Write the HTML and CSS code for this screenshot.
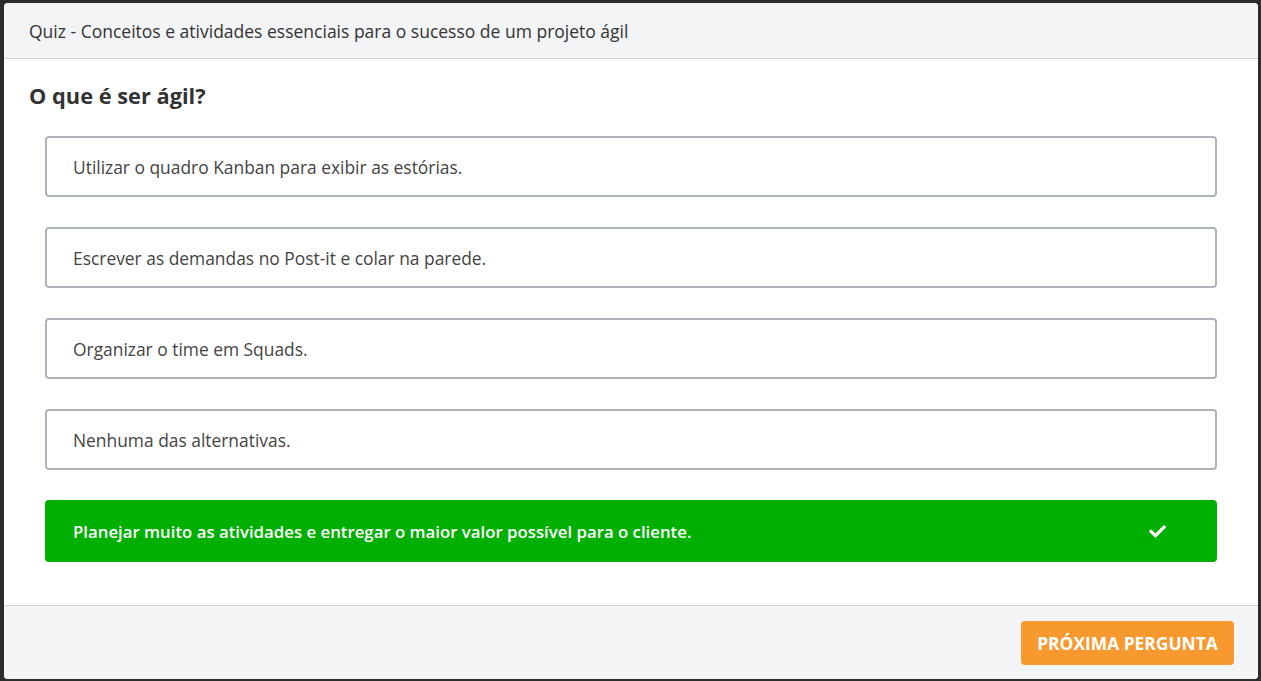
FILE: index.html
```
<!DOCTYPE html>
<html lang="pt">
<head>
<meta charset="utf-8">
<title>Quiz</title>
<link rel="stylesheet" href="styles.css">
</head>
<body>
<div class="modal">
  <div class="modal-header">Quiz - Conceitos e atividades essenciais para o sucesso de um projeto ágil</div>
  <div class="modal-body">
    <h2 class="question">O que é ser ágil?</h2>
    <ul class="options">
      <li class="option">Utilizar o quadro Kanban para exibir as estórias.</li>
      <li class="option">Escrever as demandas no Post-it e colar na parede.</li>
      <li class="option">Organizar o time em Squads.</li>
      <li class="option">Nenhuma das alternativas.</li>
      <li class="option correct">
        <span>Planejar muito as atividades e entregar o maior valor possível para o cliente.</span>
        <svg class="check" viewBox="0 0 512 512" width="17" height="17" aria-hidden="true"><path fill="#fff" d="M173.9 439.4l-166.4-166.4c-10-10-10-26.2 0-36.2l36.2-36.2c10-10 26.2-10 36.2 0L192 312.7 432.1 72.6c10-10 26.2-10 36.2 0l36.2 36.2c10 10 10 26.2 0 36.2l-294.4 294.4c-10 10-26.2 10-36.2 0z"/></svg>
      </li>
    </ul>
  </div>
  <div class="modal-footer">
    <button class="next-btn" type="button">PRÓXIMA PERGUNTA</button>
  </div>
</div>
</body>
</html>
```
FILE: styles.css
```
html, body {
  margin: 0;
  height: 100%;
}
body {
  background: #2c2c2c;
  padding: 3px 3px 2px 4px;
  box-sizing: border-box;
  font-family: "Open Sans", "Liberation Sans", sans-serif;
}
.modal {
  background: #fff;
  border-radius: 4px;
  overflow: hidden;
  height: 100%;
  display: flex;
  flex-direction: column;
}
.modal-header {
  background: #f3f4f6;
  height: 55px;
  border-bottom: 1px solid #cfd1d4;
  display: flex;
  align-items: center;
  padding-left: 25px;
  font-size: 17.5px;
  color: #333;
  box-sizing: content-box;
}
.modal-body {
  flex: 1;
  padding: 22px 41px 0 41px;
}
.question {
  margin: 0 0 25px -16px;
  font-size: 21.8px;
  line-height: 30px;
  font-weight: 700;
  color: #333;
}
.options {
  list-style: none;
  margin: 0;
  padding: 0;
  display: flex;
  flex-direction: column;
  gap: 30px;
}
.option {
  height: 61px;
  box-sizing: border-box;
  border: 2px solid #aeb3b9;
  border-radius: 4px;
  display: flex;
  align-items: center;
  justify-content: space-between;
  padding: 0 49px 0 26px;
  font-size: 17.4px;
  color: #444;
}
.option.correct {
  height: 62px;
  background: #00b000;
  border-color: #00b000;
  color: #fff;
  font-size: 16.8px;
  font-weight: 600;
}
.check {
  display: block;
}
.modal-footer {
  background: #f3f4f6;
  border-top: 1px solid #cfd1d4;
  height: 73px;
  display: flex;
  align-items: center;
  justify-content: flex-end;
  padding-right: 24px;
}
.next-btn {
  width: 213px;
  height: 44px;
  border: none;
  border-radius: 4px;
  background: #f8992f;
  color: #fff;
  font-family: "Open Sans", "Liberation Sans", sans-serif;
  font-size: 17.4px;
  font-weight: 700;
  cursor: pointer;
}
```
